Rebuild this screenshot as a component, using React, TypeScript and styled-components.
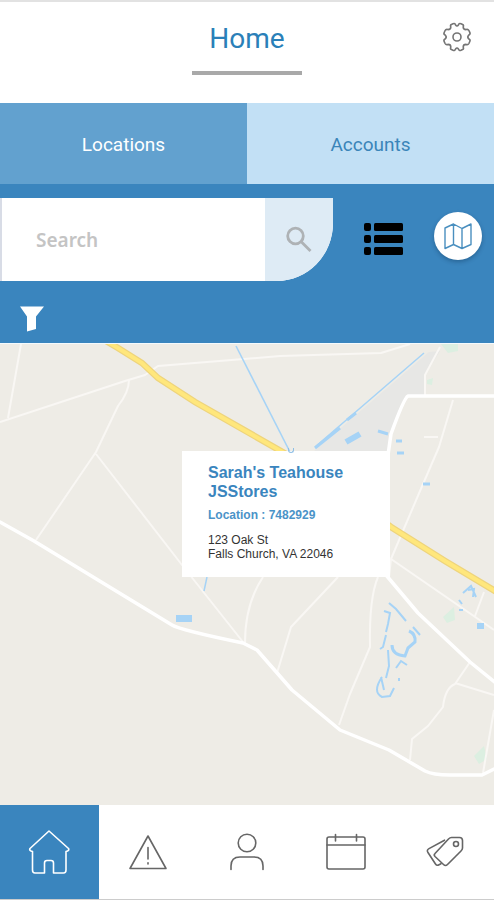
import React from "react";
import styled, { createGlobalStyle } from "styled-components";

const Global = createGlobalStyle`
  *, *::before, *::after { box-sizing: border-box; }
  body { margin: 0; background: #ffffff; font-family: Roboto, "Liberation Sans", sans-serif; }
  button { font: inherit; border: 0; padding: 0; background: none; cursor: pointer; }
  svg { display: block; }
`;

const Page = styled.div`
  display: flex;
  flex-direction: column;
  min-height: 100vh;
  border-top: 2px solid #e2e2e2;
  border-bottom: 1px solid #cccccc;
`;

const Header = styled.header`
  display: grid;
  grid-template-columns: 1fr auto 1fr;
  align-items: start;
  height: 101px;
  padding: 20px 22px 0;
`;

const Title = styled.h1`
  grid-column: 2;
  width: 110px;
  margin: 0;
  padding: 1px 0 16px;
  border-bottom: 4px solid #a9a9a9;
  color: #2a80b8;
  font-size: 28px;
  font-weight: 400;
  line-height: 32px;
  text-align: center;
`;

const SettingsButton = styled.button`
  justify-self: end;
`;

const Tabs = styled.div`
  display: grid;
  grid-template-columns: 1fr 1fr;
  height: 81px;
`;

const Tab = styled.button<{ $active?: boolean }>`
  padding-top: 1px;
  background: ${(p) => (p.$active ? "#62a1cf" : "#c2e0f5")};
  color: ${(p) => (p.$active ? "#ffffff" : "#3a85b9")};
  font-size: 19px;
`;

const Tools = styled.section`
  padding: 14px 12px 0 0;
  height: 160px;
  background: #3a85be;
  border-bottom: 1px solid #f4fafd;
`;

const SearchRow = styled.div`
  display: flex;
  align-items: center;
`;

const SearchForm = styled.form`
  display: flex;
  flex: 1;
  height: 83px;
  overflow: hidden;
  border-left: 2px solid #d8dce6;
  border-bottom-right-radius: 56px 58px;
  background: #ffffff;
`;

const SearchInput = styled.input`
  flex: 1;
  min-width: 0;
  padding: 0 34px;
  border: 0;
  outline: 0;
  background: #ffffff;
  color: #555555;
  font: 600 19px "Noto Sans", sans-serif;
  &::placeholder { color: #c4c4c4; opacity: 1; }
`;

const SearchButton = styled.button`
  display: grid;
  place-items: center;
  width: 68px;
  background: #deebf5;
`;

const ListButton = styled.button`
  margin: 0 30px;
`;

const MapButton = styled.button`
  display: grid;
  place-items: center;
  width: 48px;
  height: 48px;
  margin-bottom: 8px;
  border-radius: 50%;
  background: #ffffff;
  box-shadow: 0 2px 4px rgba(0, 30, 60, 0.3);
`;

const FilterButton = styled.button`
  margin: 24px 0 0 18px;
`;

const MapArea = styled.main`
  position: relative;
  flex: 1;
  min-height: 320px;
  overflow: hidden;
  background: #eeece6;
`;

const MapDrawing = styled.svg`
  position: absolute;
  inset: 0;
  width: 100%;
  height: 100%;
`;

const Callout = styled.article`
  position: absolute;
  top: 107px;
  left: calc(50% - 65px);
  width: 208px;
  padding: 12px 26px 16px;
  background: #ffffff;
  font-family: "Liberation Sans", Arial, sans-serif;
`;

const StoreName = styled.h2`
  margin: 0 0 8px;
  color: #3a85be;
  font-size: 16px;
  line-height: 19px;
`;

const LocationId = styled.p`
  margin: 0 0 11px;
  color: #4a93c8;
  font-size: 12px;
  font-weight: 700;
  line-height: 13px;
`;

const Address = styled.address`
  color: #333333;
  font-size: 12px;
  font-style: normal;
  line-height: 14px;
  white-space: nowrap;
`;

const Nav = styled.nav`
  display: grid;
  grid-template-columns: repeat(5, 1fr);
  height: 94px;
`;

const NavLink = styled.a<{ $active?: boolean }>`
  display: grid;
  place-items: center;
  background: ${(p) => (p.$active ? "#3a85be" : "#ffffff")};
  color: ${(p) => (p.$active ? "#ffffff" : "#666666")};
`;

const LineIcon = styled.svg`
  fill: none;
  stroke: currentColor;
  stroke-width: 1.6;
  stroke-linecap: round;
  stroke-linejoin: round;
`;

const GearIcon = () => (
  <LineIcon width="30" height="30" viewBox="0 0 30 30" color="#757575">
    <circle cx="15" cy="15" r="4" />
    <path d="M11 1.8 Q13.2 1 13.6 3 Q15 5 16.4 3 Q16.8 1 19 1.8 L20.6 2.5 Q22 3.2 21.2 5 Q21.2 7.6 24 7.6 Q26 6.8 26.9 8.5 L27.9 10.7 Q28.6 12.3 26.6 13.2 Q25 15 26.6 16.8 Q28.6 17.7 27.9 19.3 L26.9 21.5 Q26 23.2 24 22.4 Q21.2 22.4 21.2 25 Q22 26.8 20.6 27.5 L19 28.2 Q17 29 16.4 27 Q15 25 13.6 27 Q13 29 11 28.2 L9.4 27.5 Q8 26.8 8.8 25 Q8.8 22.4 6 22.4 Q4 23.2 3.1 21.5 L2.1 19.3 Q1.4 17.7 3.4 16.8 Q5 15 3.4 13.2 Q1.4 12.3 2.1 10.7 L3.1 8.5 Q4 6.8 6 7.6 Q8.8 7.6 8.8 5 Q8 3.2 9.4 2.5 Z" />
  </LineIcon>
);

const SearchIcon = () => (
  <svg width="28" height="28" viewBox="0 0 28 28" fill="none" stroke="#aeb2b5" strokeWidth="2.8">
    <circle cx="10.5" cy="10" r="7.8" />
    <path d="M16 15.5 L25.5 25" />
  </svg>
);

const ListIcon = () => (
  <svg width="41" height="34" viewBox="0 0 41 34" fill="#000000">
    {[0, 12, 24].map((y) => (
      <g key={y}>
        <rect x="1" y={y} width="7" height="8" rx="2" />
        <rect x="11" y={y} width="29" height="8" rx="1.5" />
      </g>
    ))}
  </svg>
);

const FoldedMapIcon = () => (
  <LineIcon width="30" height="30" viewBox="0 0 30 30" color="#4a8fbf">
    <path
      d="M2 7 L10.5 3 L19 7.5 L28 3 V23.5 L19 27.5 L10.5 23.5 L2 27.5 Z M10.5 3 V23.5 M19 7.5 V27.5"
      strokeWidth="1.4"
    />
  </LineIcon>
);

const FilterIcon = () => (
  <svg width="28" height="28" viewBox="0 0 28 28" fill="#ffffff">
    <path d="M2 1.5 H26 L18 11.5 V24 L9 26.5 V11.5 Z" />
  </svg>
);

const HomeIcon = () => (
  <LineIcon width="44" height="46" viewBox="0 0 44 46">
    <path d="M22 2 L3 19.5 Q2 21 4 22 L5.5 22.5 V41 Q5.5 44 8 44 H17.5 V34 Q17.5 31.5 20 31.5 H24 Q26.5 31.5 26.5 34 V44 H36.5 Q39 44 39 41 V22.5 L40.5 22 Q42.5 21 41.5 19.5 Z" />
  </LineIcon>
);

const AlertIcon = () => (
  <LineIcon width="40" height="38" viewBox="0 0 40 38">
    <path d="M20 3 L38 35.5 H2 Z M20 14.5 V26 M20 29.8 V31" />
  </LineIcon>
);

const PersonIcon = () => (
  <LineIcon width="36" height="40" viewBox="0 0 36 40">
    <circle cx="18" cy="11" r="8.8" />
    <path d="M2 37.5 V34 Q2 25 11 25 H25 Q34 25 34 34 V37.5" />
  </LineIcon>
);

const CalendarIcon = () => (
  <LineIcon width="42" height="40" viewBox="0 0 42 40">
    <rect x="2" y="5" width="38" height="32" rx="2" />
    <path d="M2 13 H40 M10.5 2.5 V9 M31.5 2.5 V9" />
  </LineIcon>
);

const TagsIcon = () => (
  <LineIcon width="40" height="34" viewBox="0 0 40 34">
    <path d="M26.5 2.5 H34.5 Q37.5 2.5 37.5 5.5 V13 Q37.5 14.5 36 16 L22.5 29.5 Q20.5 31.5 18.5 29.5 L10 21.5 Q8.5 20 10 18.5 L23.5 4 Q25 2.5 26.5 2.5 Z" />
    <circle cx="31" cy="9" r="2.5" />
    <path d="M19.5 5.2 L4 13.6 Q1.5 15 2.8 17.2 L10.5 29 Q11.8 31 14 29.8 L16 28.7" />
  </LineIcon>
);

const MinorRoads = styled.g`
  fill: none;
  stroke: #f9f7f4;
  stroke-width: 2;
  stroke-linejoin: round;
`;

const MainRoads = styled.g`
  fill: none;
  stroke: #ffffff;
  stroke-width: 3.5;
  stroke-linecap: round;
  stroke-linejoin: round;
`;

const Water = styled.g`
  fill: none;
  stroke: #a6d3f6;
  stroke-width: 2;
`;

const highway = "M101 338 L118 348 L142 363 L158 378 L195 402 L300 462 L391 527 L445 561 L500 594";

const TerrainMap = () => (
  <MapDrawing viewBox="0 344 494 461" preserveAspectRatio="xMidYMid slice" aria-hidden="true">
    <path d="M429 352 L440 351 L425 375 L425 395 L406 395 L389 435 L388 452 H313 Z" fill="#e7e7e5" />
    <g fill="#dcefe1">
      <path d="M441 344 H458 V351 L448 353 Z M427 380 L433 378 L432 385 L427 384 Z M443 617 L454 607 L455 620 L447 623 Z M474 756 L484 746 L487 759 L479 764 Z" />
    </g>
    <MinorRoads>
      <path d="M21 344 L8 418 M0 422 L125 381 L145 375 L158 366 L280 356 L381 353 L410 344" />
      <path d="M129 380 Q129 392 118 406 L96 452 L36 540 M96 454 L182 565 L243 642" />
      <path d="M440 347 L425 375 L425 396 M453 400 L439 447 L420 491 L391 559 L389 577" />
      <path d="M391 559 L494 630 M424 437 H438" />
      <path d="M263 577 Q245 604 245 643 M338 577 L291 627 L277 673" />
      <path d="M378 577 Q369 598 370 647 L350 694 L339 725" />
      <path d="M470 662 L455 684 Q445 688 443 707 L428 726 L412 739 L410 760 M455 683 L494 695 M494 710 L483 773 M484 592 L475 616" />
    </MinorRoads>
    <MainRoads>
      <path d="M494 396 H408 Q404 398 391 434 L388 455" />
      <path d="M0 522 L34 541 L98 580 L172 625 Q180 630 243 643 L257 650 L292 690 L340 730 L389 750 L425 771 Q433 775 450 775 H482 L494 769" />
      <path d="M386 575 L418 613 L470 662 L497 684" />
    </MainRoads>
    <path d={highway} fill="none" stroke="#eed47c" strokeWidth="6.5" />
    <path d={highway} fill="none" stroke="#ffe77c" strokeWidth="4" />
    <Water>
      <path d="M236 346 L290 452" strokeWidth="1.6" />
      <path d="M315 447 L424 353 M207 577 L204 591" strokeWidth="1.5" />
      <path d="M315 448 L340 428 M347 420 L356 413 M378 431 L388 434 M396 441 H402 M397 453 H404 M423 484 H430" strokeWidth="3" />
      <path d="M346 442 L360 434 M477 626 H484" strokeWidth="6" />
      <path d="M389 603 L396 609 L406 621 M384 611 L390 613 L388 624 L386 632 M386 635 L383 647 L380 649 M413 627 L420 635 M388 650 L389 666 L386 678 M396 668 L401 661 L407 665 M399 678 V681 M382 677 Q372 692 382 697 L390 696 L394 688 M381 677 L384 690" />
      <path d="M392 645 Q392 655 405 656 L408 648 L415 642 Q416 634 409 631" strokeWidth="3" />
      <path d="M463 593 L471 586 L476 597 M468 590 L474 589 L473 597 M459 600 L462 604 M459 610 H463" />
    </Water>
    <rect x="176" y="615" width="16" height="7" fill="#a6d3f6" />
  </MapDrawing>
);

const AnchorDot = styled.span`
  position: absolute;
  top: 104px;
  left: calc(50% + 41px);
  width: 6px;
  height: 5px;
  border: 1px solid #8ebfe6;
  border-top: 0;
  border-radius: 0 0 3px 3px;
`;

const navItems = [
  { label: "Home", icon: <HomeIcon />, active: true },
  { label: "Alerts", icon: <AlertIcon /> },
  { label: "Profile", icon: <PersonIcon /> },
  { label: "Calendar", icon: <CalendarIcon /> },
  { label: "Offers", icon: <TagsIcon /> },
];

export default function App() {
  return (
    <Page>
      <Global />
      <Header>
        <Title>Home</Title>
        <SettingsButton aria-label="Settings"><GearIcon /></SettingsButton>
      </Header>
      <Tabs role="tablist">
        <Tab role="tab" aria-selected="true" $active>Locations</Tab>
        <Tab role="tab" aria-selected="false">Accounts</Tab>
      </Tabs>
      <Tools>
        <SearchRow>
          <SearchForm role="search" onSubmit={(e) => e.preventDefault()}>
            <SearchInput type="text" aria-label="Search" placeholder="Search" />
            <SearchButton type="submit" aria-label="Submit search"><SearchIcon /></SearchButton>
          </SearchForm>
          <ListButton aria-label="List view"><ListIcon /></ListButton>
          <MapButton aria-label="Map view"><FoldedMapIcon /></MapButton>
        </SearchRow>
        <FilterButton aria-label="Filter"><FilterIcon /></FilterButton>
      </Tools>
      <MapArea>
        <TerrainMap />
        <Callout>
          <StoreName>Sarah's Teahouse JSStores</StoreName>
          <LocationId>Location : 7482929</LocationId>
          <Address>123 Oak St<br />Falls Church, VA 22046</Address>
        </Callout>
        <AnchorDot />
      </MapArea>
      <Nav aria-label="Main">
        {navItems.map((item) => (
          <NavLink key={item.label} href="#" aria-label={item.label} $active={item.active}>
            {item.icon}
          </NavLink>
        ))}
      </Nav>
    </Page>
  );
}
